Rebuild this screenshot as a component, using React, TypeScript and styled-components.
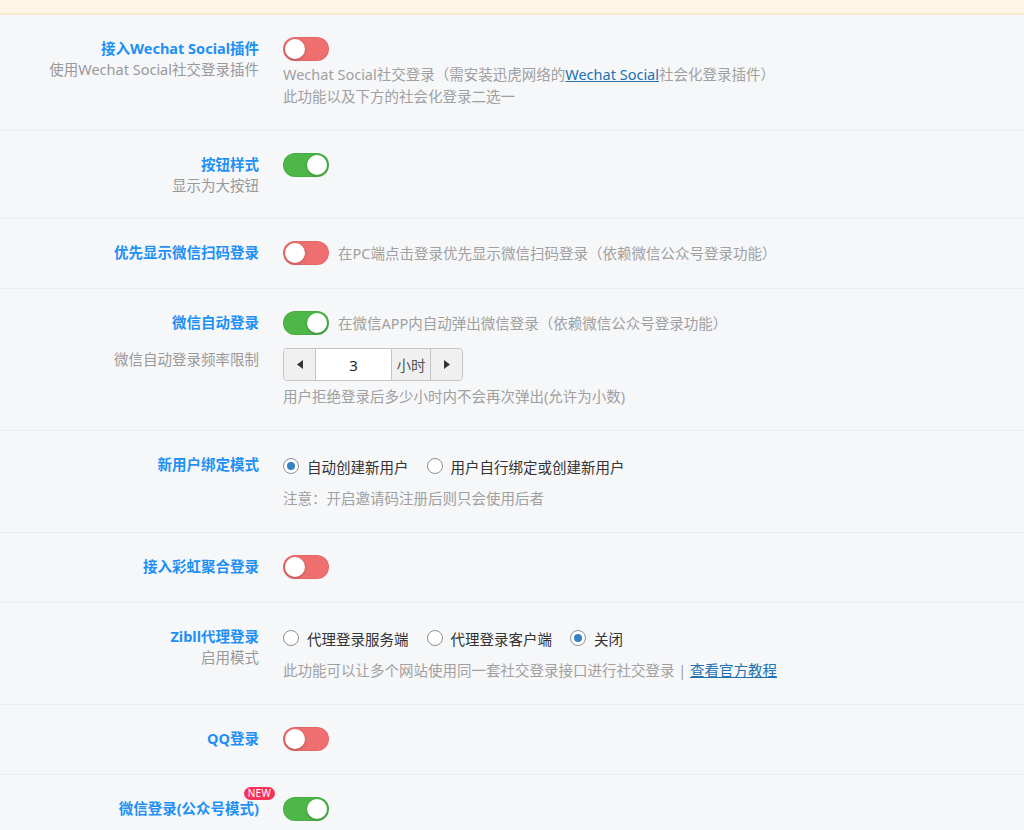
import React from 'react';
import styled, { createGlobalStyle } from 'styled-components';

const GlobalStyle = createGlobalStyle`
    body {
        margin: 0;
        background: #f6f7f9;
        font-family: 'Noto Sans', 'Noto Sans CJK SC', sans-serif;
        font-size: 14.5px;
        color: #333;
    }
`;

const Notice = styled.div`
    height: 13px;
    background: #fef6e4;
    border-bottom: 2px solid #f6ebcf;
`;

const Field = styled.div`
    display: grid;
    grid-template-columns: 259px 1fr;
    column-gap: 24px;
    row-gap: 13px;
    padding: 22px 0 23px;
    border-bottom: 1px solid #eaecef;
`;

const TitleCol = styled.div`
    text-align: right;
`;

const TitleWrap = styled.span`
    position: relative;
    display: inline-block;
`;

const Title = styled.div<{ $muted?: boolean }>`
    font-weight: ${(p) => (p.$muted ? 400 : 700)};
    color: ${(p) => (p.$muted ? '#999' : '#1e90f5')};
    line-height: 22px;
`;

const Subtitle = styled.div`
    color: #999;
    line-height: 20px;
`;

const Badge = styled.span`
    position: absolute;
    top: -10px;
    right: -16px;
    height: 13px;
    padding: 0 4px;
    border-radius: 7px;
    background: #f4345a;
    color: #fff;
    font-size: 10px;
    font-weight: 400;
    line-height: 13px;
    letter-spacing: 0.3px;
`;

const Content = styled.div`
    display: flex;
    flex-direction: column;
    align-items: flex-start;
`;

const Line = styled.div`
    display: flex;
    align-items: center;
    gap: 9px;
`;

const Toggle = styled.span<{ $on?: boolean }>`
    position: relative;
    display: inline-block;
    flex: none;
    width: 46px;
    height: 24px;
    border-radius: 12px;
    background: ${(p) => (p.$on ? '#4db748' : '#ef6f70')};
    box-shadow: inset 0 0 0 1px rgba(0, 0, 0, 0.06);

    &::after {
        content: '';
        position: absolute;
        top: 2px;
        left: ${(p) => (p.$on ? '24px' : '2px')};
        width: 20px;
        height: 20px;
        border-radius: 50%;
        background: #fff;
        box-shadow: 0 1px 3px rgba(0, 0, 0, 0.25);
    }
`;

const Desc = styled.div<{ $gap?: number }>`
    color: #a0a0a0;
    line-height: 22px;
    margin-top: ${(p) => p.$gap ?? 0}px;
`;

const Link = styled.a`
    color: #2271b1;
    text-decoration: underline;
`;

const Radios = styled.div`
    display: flex;
    align-items: center;
    gap: 18px;
    height: 26px;
`;

const RadioItem = styled.label`
    display: flex;
    align-items: center;
    gap: 8px;
    color: #333;
`;

const RadioDot = styled.span<{ $checked?: boolean }>`
    display: inline-flex;
    align-items: center;
    justify-content: center;
    width: 16px;
    height: 16px;
    box-sizing: border-box;
    border-radius: 50%;
    border: 1px solid #8c8f94;
    background: #fff;

    &::after {
        content: '';
        width: 8px;
        height: 8px;
        border-radius: 50%;
        background: ${(p) => (p.$checked ? '#3582c4' : 'transparent')};
    }
`;

const Stepper = styled.div`
    display: flex;
    height: 33px;
    box-sizing: border-box;
    border: 1px solid #c3c4c7;
    border-radius: 4px;
    overflow: hidden;
`;

const StepBtn = styled.span`
    display: flex;
    align-items: center;
    justify-content: center;
    width: 31px;
    background: #f0f0f1;
`;

const StepValue = styled.span`
    display: flex;
    align-items: center;
    justify-content: center;
    width: 75px;
    background: #fff;
    border-left: 1px solid #c3c4c7;
    border-right: 1px solid #c3c4c7;
    font-size: 15px;
    color: #222;
`;

const StepUnit = styled(StepBtn)`
    width: 38px;
    color: #555;
    border-right: 1px solid #c3c4c7;
`;

const Arrow = ({ dir }: { dir: 'left' | 'right' }) => (
    <svg width="6" height="9" viewBox="0 0 6 9">
        <polygon points={dir === 'left' ? '6,0 6,9 0,4.5' : '0,0 0,9 6,4.5'} fill="#333" />
    </svg>
);

const Radio = ({ label, checked }: { label: string; checked?: boolean }) => (
    <RadioItem>
        <RadioDot $checked={checked} />
        {label}
    </RadioItem>
);

const App = () => {
    return (
        <>
            <GlobalStyle />
            <Notice />

            <Field>
                <TitleCol>
                    <Title>接入Wechat Social插件</Title>
                    <Subtitle>使用Wechat Social社交登录插件</Subtitle>
                </TitleCol>
                <Content>
                    <Toggle />
                    <Desc $gap={2}>
                        Wechat Social社交登录（需安装迅虎网络的<Link>Wechat Social</Link>社会化登录插件）
                        <br />
                        此功能以及下方的社会化登录二选一
                    </Desc>
                </Content>
            </Field>

            <Field>
                <TitleCol>
                    <Title>按钮样式</Title>
                    <Subtitle>显示为大按钮</Subtitle>
                </TitleCol>
                <Content>
                    <Toggle $on />
                </Content>
            </Field>

            <Field>
                <TitleCol>
                    <Title>优先显示微信扫码登录</Title>
                </TitleCol>
                <Content>
                    <Line>
                        <Toggle />
                        <Desc>在PC端点击登录优先显示微信扫码登录（依赖微信公众号登录功能）</Desc>
                    </Line>
                </Content>
            </Field>

            <Field>
                <TitleCol>
                    <Title>微信自动登录</Title>
                </TitleCol>
                <Content>
                    <Line>
                        <Toggle $on />
                        <Desc>在微信APP内自动弹出微信登录（依赖微信公众号登录功能）</Desc>
                    </Line>
                </Content>
                <TitleCol>
                    <Title $muted>微信自动登录频率限制</Title>
                </TitleCol>
                <Content>
                    <Stepper>
                        <StepBtn>
                            <Arrow dir="left" />
                        </StepBtn>
                        <StepValue>3</StepValue>
                        <StepUnit>小时</StepUnit>
                        <StepBtn>
                            <Arrow dir="right" />
                        </StepBtn>
                    </Stepper>
                    <Desc $gap={4}>用户拒绝登录后多少小时内不会再次弹出(允许为小数)</Desc>
                </Content>
            </Field>

            <Field>
                <TitleCol>
                    <Title>新用户绑定模式</Title>
                </TitleCol>
                <Content>
                    <Radios>
                        <Radio label="自动创建新用户" checked />
                        <Radio label="用户自行绑定或创建新用户" />
                    </Radios>
                    <Desc $gap={8}>注意：开启邀请码注册后则只会使用后者</Desc>
                </Content>
            </Field>

            <Field>
                <TitleCol>
                    <Title>接入彩虹聚合登录</Title>
                </TitleCol>
                <Content>
                    <Toggle />
                </Content>
            </Field>

            <Field>
                <TitleCol>
                    <Title>Zibll代理登录</Title>
                    <Subtitle>启用模式</Subtitle>
                </TitleCol>
                <Content>
                    <Radios>
                        <Radio label="代理登录服务端" />
                        <Radio label="代理登录客户端" />
                        <Radio label="关闭" checked />
                    </Radios>
                    <Desc $gap={8}>
                        此功能可以让多个网站使用同一套社交登录接口进行社交登录 | <Link>查看官方教程</Link>
                    </Desc>
                </Content>
            </Field>

            <Field>
                <TitleCol>
                    <Title>QQ登录</Title>
                </TitleCol>
                <Content>
                    <Toggle />
                </Content>
            </Field>

            <Field>
                <TitleCol>
                    <TitleWrap>
                        <Title>微信登录(公众号模式)</Title>
                        <Badge>NEW</Badge>
                    </TitleWrap>
                </TitleCol>
                <Content>
                    <Toggle $on />
                </Content>
            </Field>
        </>
    );
};

export default App;
